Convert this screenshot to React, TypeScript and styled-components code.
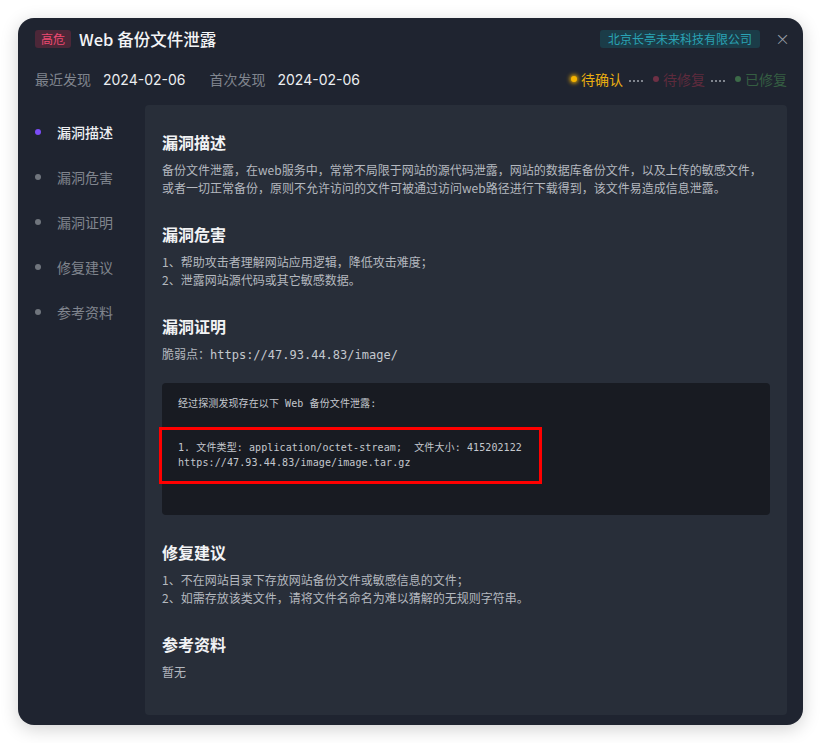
import styled, { createGlobalStyle } from 'styled-components';

const Global = createGlobalStyle`
  html, body {
    margin:0;
    padding:0;
    background:#ffffff;
  }
  body {
    font-family:"Noto Sans CJK SC", "Noto Sans", sans-serif;
  }
`;

const Page = styled.div`
  padding:18px;
  width:821px;
  height:743px;
  box-sizing:border-box;
`;

const Modal = styled.div`
  width:785px;
  height:707px;
  box-sizing:border-box;
  background:#1f2430;
  border-radius:16px;
  box-shadow:0 4px 18px rgba(0,0,0,0.18);
  padding:12px 16px 10px 17px;
  display:flex;
  flex-direction:column;
  color:#e6e8eb;
`;

const TopRow = styled.div`
  display:flex;
  align-items:center;
  height:18px;
`;

const Badge = styled.span`
  background:#4c2738;
  color:#ef4a72;
  font-size:12px;
  line-height:18px;
  padding:0 6px;
  border-radius:3px;
`;

const Title = styled.h2`
  margin:0 0 0 8px;
  font-size:16.5px;
  font-weight:500;
  color:#f3f4f6;
  line-height:18px;
`;

const Spacer = styled.div`
  flex:1;
`;

const Company = styled.span`
  background:#1b3c48;
  color:#2aa3b4;
  font-size:12px;
  line-height:18px;
  padding:0 8px;
  border-radius:3px;
`;

const Close = styled.span`
  color:#9aa0a8;
  font-size:18px;
  line-height:18px;
  margin-left:15px;
  width:12px;
  text-align:center;
  font-family:"DejaVu Sans", sans-serif;
  font-weight:300;
`;

const MetaRow = styled.div`
  display:flex;
  align-items:center;
  margin-top:13px;
  height:36px;
  font-size:14px;
`;

const MetaLabel = styled.span`
  color:#80858e;
  margin-right:12px;
`;

const MetaValue = styled.span`
  color:#eceef1;
  margin-right:24px;
  font-family:Inter, "Noto Sans", sans-serif;
`;

const Steps = styled.div`
  display:flex;
  align-items:center;
  font-size:14px;
`;

const Dot = styled.span<{ $c: string; $glow?: boolean }>`
  width:6px;
  height:6px;
  border-radius:50%;
  background:${p => p.$c};
  box-shadow:${p => (p.$glow ? `0 0 4px 1px ${p.$c}` : 'none')};
  margin-right:4px;
`;

const StepText = styled.span<{ $c: string }>`
  color:${p => p.$c};
`;

const Dots = styled.span`
  width:15px;
  height:2px;
  margin:4px 10px 0 5px;
  background:radial-gradient(circle, #80858e 0.8px, transparent 1.1px) 0 0 / 4px 2px repeat-x;
`;

const Body = styled.div`
  flex:1;
  display:flex;
  margin-top:8px;
  min-height:0;
`;

const Side = styled.ul`
  list-style:none;
  margin:0;
  padding:17px 0 0;
  width:110px;
  flex-shrink:0;
`;

const SideItem = styled.li<{ $active?: boolean }>`
  display:flex;
  align-items:center;
  height:20px;
  margin-bottom:25px;
  font-size:14px;
  color:${p => (p.$active ? '#eef0f3' : '#80858e')};
  font-weight:${p => (p.$active ? 500 : 400)};
`;

const SideDot = styled.span<{ $active?: boolean }>`
  width:6px;
  height:6px;
  border-radius:50%;
  background:${p => (p.$active ? '#7b4cf6' : '#70757d')};
  margin-right:16px;
`;

const Panel = styled.div`
  flex:1;
  background:#282e39;
  border-radius:4px;
  padding:25px 17px 0;
`;

const Section = styled.section`
  margin-bottom:25px;
`;

const H = styled.h3`
  margin:0;
  font-size:16px;
  font-weight:700;
  line-height:24px;
  color:#f2f3f5;
`;

const P = styled.p`
  margin:7px 0 0;
  font-size:12px;
  line-height:18px;
  color:#b4b8bf;
`;

const Mono = styled.span`
  font-family:"DejaVu Sans Mono", monospace;
  font-size:12px;
  color:#c4c8ce;
`;

const Code = styled.pre`
  position:relative;
  margin:19px 0 0;
  background:#181b22;
  border-radius:4px;
  padding:14px 16px 15px;
  font-family:"DejaVu Sans Mono", "Noto Sans CJK SC", monospace;
  font-size:10px;
  letter-spacing:0.1px;
  line-height:14.7px;
  color:#c4c8ce;
  white-space:pre;
`;

const Highlight = styled.div`
  position:absolute;
  left:-3px;
  top:44px;
  width:383px;
  height:57px;
  box-sizing:border-box;
  border:3px solid #ff0000;
`;

const sections = ['漏洞描述', '漏洞危害', '漏洞证明', '修复建议', '参考资料'];

const codeText = `经过探测发现存在以下 Web 备份文件泄露:


1. 文件类型: application/octet-stream;  文件大小: 415202122
https://47.93.44.83/image/image.tar.gz


`;

export default function App() {
  return (
    <Page>
      <Global />
      <Modal>
        <TopRow>
          <Badge>高危</Badge>
          <Title>Web 备份文件泄露</Title>
          <Spacer />
          <Company>北京长亭未来科技有限公司</Company>
          <Close>×</Close>
        </TopRow>
        <MetaRow>
          <MetaLabel>最近发现</MetaLabel>
          <MetaValue>2024-02-06</MetaValue>
          <MetaLabel>首次发现</MetaLabel>
          <MetaValue>2024-02-06</MetaValue>
          <Spacer />
          <Steps>
            <Dot $c="#f5b400" $glow />
            <StepText $c="#e9ae10">待确认</StepText>
            <Dots />
            <Dot $c="#6e3045" />
            <StepText $c="#5e2b3d">待修复</StepText>
            <Dots />
            <Dot $c="#3c6a48" />
            <StepText $c="#355e42">已修复</StepText>
          </Steps>
        </MetaRow>
        <Body>
          <Side>
            {sections.map((s, i) => (
              <SideItem key={s} $active={i === 0}>
                <SideDot $active={i === 0} />
                {s}
              </SideItem>
            ))}
          </Side>
          <Panel>
            <Section>
              <H>漏洞描述</H>
              <P>
                备份文件泄露，在web服务中，常常不局限于网站的源代码泄露，网站的数据库备份文件，以及上传的敏感文件，
                <br />
                或者一切正常备份，原则不允许访问的文件可被通过访问web路径进行下载得到，该文件易造成信息泄露。
              </P>
            </Section>
            <Section>
              <H>漏洞危害</H>
              <P>
                1、帮助攻击者理解网站应用逻辑，降低攻击难度；
                <br />
                2、泄露网站源代码或其它敏感数据。
              </P>
            </Section>
            <Section>
              <H>漏洞证明</H>
              <P>
                脆弱点：<Mono>https://47.93.44.83/image/</Mono>
              </P>
              <Code>
                {codeText}
                <Highlight />
              </Code>
            </Section>
            <Section>
              <H>修复建议</H>
              <P>
                1、不在网站目录下存放网站备份文件或敏感信息的文件；
                <br />
                2、如需存放该类文件，请将文件名命名为难以猜解的无规则字符串。
              </P>
            </Section>
            <Section>
              <H>参考资料</H>
              <P>暂无</P>
            </Section>
          </Panel>
        </Body>
      </Modal>
    </Page>
  );
}
